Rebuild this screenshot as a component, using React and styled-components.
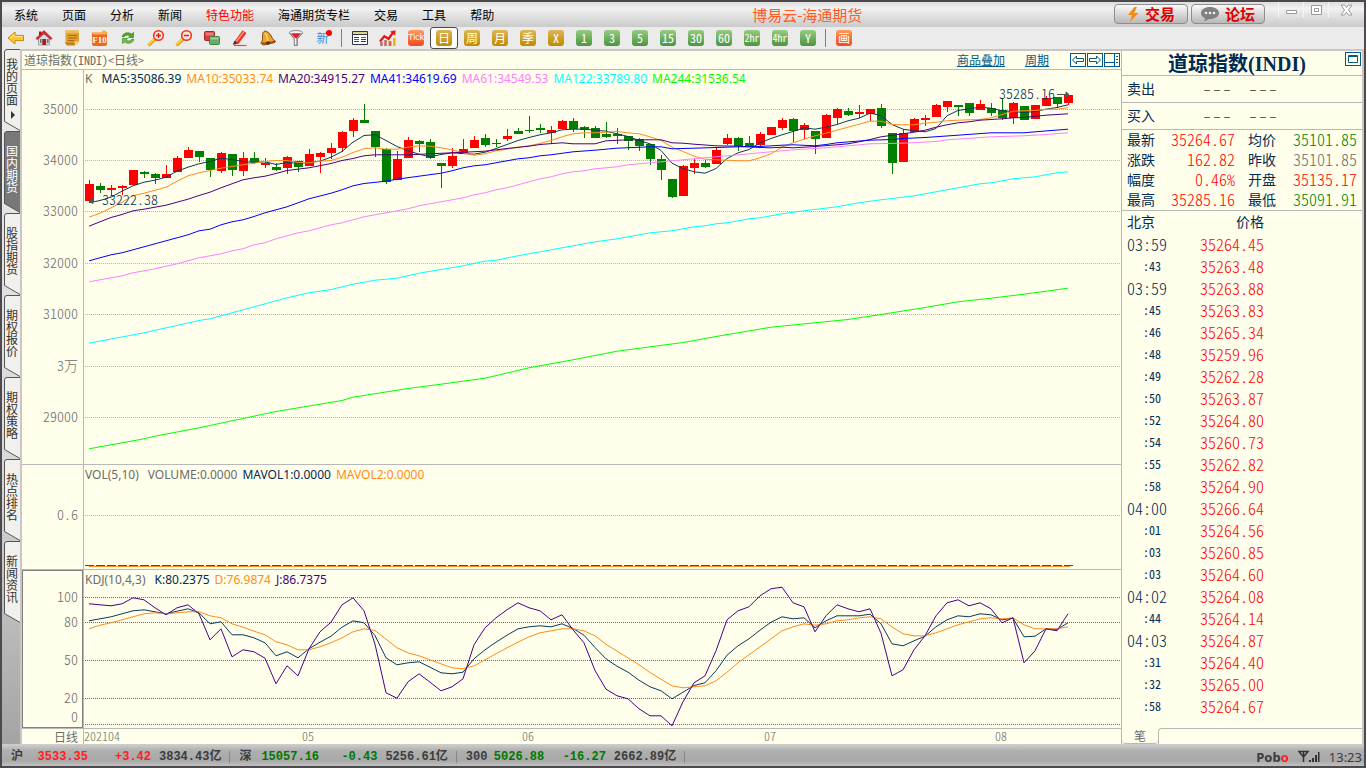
import React from "react";
import styled, { createGlobalStyle } from "styled-components";

const CJK = '"Noto Sans CJK SC", "Noto Sans", sans-serif';
const LATIN = '"Noto Sans", "Noto Sans CJK SC", sans-serif';

const color = {
  paper: "#ffffec",
  line: "#b8b8b8",
  edge: "#cdc5c5",
  frame: "#4c4a4c",
  navy: "#002b55",
  grey: "#6b6b6b",
  up: "#ff0000",
  down: "#008000",
  orange: "#ff8c1a",
  purple: "#4b0082",
};

const GlobalStyle = createGlobalStyle`
  * { box-sizing: border-box; }
  body { margin: 0; font-family: ${CJK}; font-size: 12px; background: ${color.frame}; }
  button { font: inherit; color: inherit; border: 0; padding: 0; background: none; cursor: pointer; }
  table { border-collapse: collapse; border-spacing: 0; }
  th, td { padding: 0; font-weight: 400; vertical-align: top; }
`;

/* ---------- window frame ---------- */

const Window = styled.div`
  display: flex;
  flex-direction: column;
  min-height: 100vh;
  border: 2px solid ${color.frame};
  background: #ebebeb;
`;

const TitleBar = styled.header`
  display: grid;
  grid-template-columns: 1fr auto 1fr;
  align-items: center;
  height: 25px;
  background: linear-gradient(#dcdcdc, #f2f2f2 25%, #e4e4e4 50%, #cacaca);
`;

const Menu = styled.nav`
  display: flex;
`;

const MenuItem = styled.button`
  padding: 0 12px;
  line-height: 24px;
  white-space: nowrap;
  color: ${(p) => (p.$hot ? color.up : "#000")};
`;

const AppTitle = styled.h1`
  margin: 0 0 0 246px;
  font-size: 15px;
  font-weight: 400;
  line-height: 24px;
  white-space: nowrap;
  color: #ff5a1f;
`;

const TitleTools = styled.div`
  display: flex;
  justify-content: flex-end;
  align-items: flex-start;
  height: 25px;
`;

const PillButton = styled.button`
  display: flex;
  align-items: center;
  justify-content: center;
  gap: 6px;
  width: 74px;
  height: 20px;
  margin: 2px 3px 0 0;
  border: 1px solid #8e8e8e;
  border-radius: 4px;
  background: linear-gradient(#fafafa, #d8d8d8 50%, #b8b8b8);
  color: #e00000;
  font-size: 15px;
  font-weight: 700;
  line-height: 18px;
`;

const WindowControls = styled.div`
  display: flex;
  margin-left: 10px;
`;

const WindowButton = styled.button`
  display: grid;
  place-items: center;
  width: ${(p) => (p.$wide ? "36px" : "25px")};
  height: 16px;
  border-left: 1px solid #f6f6f6;
`;

/* ---------- toolbar ---------- */

const ToolBar = styled.div`
  display: flex;
  align-items: center;
  height: 22px;
  background: #ebebeb;
`;

const ToolButton = styled.button`
  display: grid;
  place-items: center;
  width: 28px;
  height: 22px;
  border: ${(p) => (p.$active ? "1px solid #4a4a4a" : "0")};
  border-radius: 3px;
  background: ${(p) => (p.$active ? "#fff" : "none")};
`;

const ToolSeparator = styled.span`
  width: 1px;
  height: 18px;
  margin: 0 4px 0 3px;
  background: #808080;
`;

const tones = {
  gold: "linear-gradient(#dcb555, #c08a00)",
  green: "linear-gradient(#96cc80, #4c9440)",
  red: "linear-gradient(#ff9a5a, #f04a1c)",
};

const Badge = styled.span`
  width: 16px;
  height: 16px;
  border-radius: 3px;
  background: ${(p) => tones[p.$tone]};
  color: #fff;
  font-family: ${CJK};
  font-size: 12px;
  line-height: 15px;
  text-align: center;
  font-feature-settings: "hwid" 1;
`;

const TickBadge = styled(Badge)`
  font-family: "Liberation Sans Narrow", "Liberation Sans", sans-serif;
  font-size: 9px;
`;

const NewBadge = styled.span`
  display: flex;
  align-items: flex-start;
  color: #3a8ee6;
  font-size: 12px;
  line-height: 16px;

  &::after {
    content: "";
    width: 6px;
    height: 6px;
    margin: 0 0 0 -3px;
    border-radius: 50%;
    background: red;
  }
`;

/* ---------- left tabs ---------- */

const Body = styled.div`
  display: flex;
  flex: 1;
`;

const Rail = styled.nav`
  display: flex;
  flex-direction: column;
  width: 18px;
  padding-left: 2px;
  background: linear-gradient(#ebebeb, #d8d8da 60%, #a4a4a4);
`;

const RailTab = styled.button`
  display: grid;
  grid-template-columns: 16px;
  height: 82px;
  color: ${(p) => (p.$active ? "#fff" : "#333")};

  > * {
    grid-area: 1 / 1;
  }
`;

const RailLabel = styled.span`
  width: 12px;
  margin: 0 auto;
  padding-top: ${(p) => (p.$more ? "9px" : "14px")};
  font-size: 12px;
  line-height: 12px;
  word-break: break-all;
`;

/* ---------- work area ---------- */

const Work = styled.main`
  display: flex;
  flex: 1;
  border: 2px solid ${color.edge};
  border-bottom: 0;
  background: ${color.paper};
`;

const Charts = styled.section`
  display: flex;
  flex: 1;
  flex-direction: column;
  min-width: 0;
  border-right: 1px solid ${color.line};
`;

const ChartHeader = styled.div`
  display: flex;
  align-items: center;
  height: 19px;
  padding: 0 1px 0 2px;
  border-bottom: 1px solid ${color.line};
`;

const ChartName = styled.h2`
  flex: 1;
  margin: 0;
  font-size: 12px;
  font-weight: 400;
  line-height: 18px;
  color: ${color.grey};
  font-feature-settings: "hwid" 1;
`;

const HeaderLink = styled.a`
  margin-right: 20px;
  line-height: 18px;
  color: #005a8c;
`;

const HeaderButton = styled.button`
  display: grid;
  place-items: center;
  width: 16px;
  height: 14px;
  margin-left: 1px;
  border: 1px solid #005a8c;
  color: #005a8c;
`;

const Pane = styled.div`
  display: flex;
  ${(p) => (p.$height ? `height: ${p.$height}px;` : "flex: 1;")}
  min-height: ${(p) => (p.$height ? "0" : "395px")};
  border-bottom: 1px solid ${color.line};
`;

const AxisSvg = styled.svg`
  width: 61px;
  height: 100%;
  border: ${(p) => (p.$framed ? "1px solid #808080" : "0")};
  overflow: visible;
`;

const Plot = styled.div`
  display: grid;
  flex: 1;
  min-width: 0;
  border-left: 1px solid ${color.line};

  > * {
    grid-area: 1 / 1;
  }
`;

const PlotSvg = styled.svg`
  width: 100%;
  height: 100%;
  overflow: hidden;
`;

const AxisText = styled.text`
  font-family: ${CJK};
  font-size: 14px;
  font-weight: 300;
  font-feature-settings: "hwid" 1;
  fill: ${(p) => p.$fill || color.grey};
  text-anchor: ${(p) => p.$anchor || "end"};
`;

const Legend = styled.div`
  display: flex;
  gap: 5px;
  height: 20px;
  padding-left: 1px;
  font-family: ${LATIN};
  font-size: 12px;
  line-height: ${(p) => (p.$low ? "20px" : "18px")};
  white-space: nowrap;
  z-index: 1;
`;

const LegendItem = styled.span`
  color: ${(p) => p.$color};
  padding-right: ${(p) => (p.$spaced ? "4px" : "0")};
`;

const DateRow = styled.div`
  display: flex;
  height: 15px;
  line-height: 15px;
  color: ${color.grey};
`;

const Period = styled.div`
  width: 61px;
  padding-right: 5px;
  text-align: right;
`;

const DateSvg = styled.svg`
  flex: 1;
  min-width: 0;
  height: 15px;
  border-left: 1px solid ${color.line};
  overflow: visible;
`;

const DateText = styled(AxisText)`
  font-size: 12px;
`;

/* ---------- quote panel ---------- */

const Quote = styled.aside`
  display: flex;
  flex-direction: column;
  width: 240px;
  color: ${color.navy};
  font-size: 14px;
`;

const QuoteTitle = styled.div`
  display: flex;
  justify-content: flex-end;
  height: 25px;
  padding-right: 1px;
  border-bottom: 1px solid ${color.line};
`;

const QuoteName = styled.h2`
  flex: 1;
  margin: 0;
  padding-left: 8px;
  font-family: "Liberation Serif", "Noto Sans CJK SC", serif;
  font-size: 20px;
  font-weight: 700;
  line-height: 26px;
  text-align: center;
`;

const QuoteButton = styled(HeaderButton)`
  margin-top: 1px;
`;

const DealRow = styled.div`
  display: flex;
  gap: 16px;
  height: 27px;
  padding-left: 5px;
  border-bottom: 1px solid ${color.line};
  line-height: 24px;
`;

const DealLabel = styled.span`
  width: 59px;
`;

const DealValue = styled.span`
  color: #555;
  font-size: 20px;
  font-weight: 300;
  font-feature-settings: "hwid" 1;
`;

const QuoteTable = styled.table`
  width: 100%;
  table-layout: fixed;
  border-bottom: 1px solid ${color.line};

  tr { height: 20px; }
`;

const QuoteLabel = styled.th`
  width: ${(p) => (p.$first ? "42px" : "32px")};
  padding-left: ${(p) => (p.$first ? "5px" : "0")};
  line-height: 18px;
  text-align: left;
`;

const QuoteValue = styled.td`
  width: ${(p) => (p.$last ? "auto" : "84px")};
  padding-right: ${(p) => (p.$last ? "5px" : "13px")};
  color: ${(p) => p.$color};
  font-size: 16px;
  font-weight: 300;
  line-height: 18px;
  text-align: right;
  font-feature-settings: "hwid" 1;
`;

const TickTable = styled.table`
  width: 100%;
  table-layout: fixed;

  tr { height: 22px; }
`;

const TickHead = styled.th`
  width: ${(p) => (p.$price ? "auto" : "78px")};
  height: 23px;
  padding-left: ${(p) => (p.$price ? "36px" : "5px")};
  line-height: 21px;
  text-align: left;
`;

const TickTime = styled.td`
  padding-left: ${(p) => (p.$seconds ? "21px" : "5px")};
  font-size: ${(p) => (p.$seconds ? "12px" : "16px")};
  font-weight: ${(p) => (p.$seconds ? "400" : "300")};
  line-height: 20px;
  font-feature-settings: "hwid" 1;
`;

const TickPrice = styled.td`
  color: ${color.up};
  font-size: 16px;
  font-weight: 300;
  line-height: 20px;
  font-feature-settings: "hwid" 1;
`;

const QuoteTabs = styled.div`
  display: flex;
  height: 16px;
  margin-top: auto;

  &::after {
    content: "";
    flex: 1;
    border-top: 1px solid ${color.line};
    border-left: 1px solid ${color.line};
    border-top-left-radius: 4px;
  }
`;

const QuoteTab = styled.button`
  width: 36px;
  border-bottom: 1px solid ${color.line};
  border-radius: 0 0 4px 4px;
  color: ${color.grey};
  font-size: 12px;
  line-height: 15px;
`;

/* ---------- status bar ---------- */

const StatusBar = styled.footer`
  display: flex;
  align-items: center;
  height: 22px;
  padding: 3px 2px 0 9px;
  background: linear-gradient(#cfcfcf, #b0b0b0 30%, #a8a8a8 75%, #c0c0c0);
  color: #3c3c3c;
  font-family: "Liberation Mono", "Noto Sans CJK SC", monospace;
  font-size: 12px;
  font-weight: 700;
  line-height: 18px;
`;

const Market = styled.div`
  display: flex;
  padding-right: 8px;
  margin-right: 9px;
  line-height: 12px;
  border-right: 1px solid #888;
`;

const MarketName = styled.span`
  width: ${(p) => (p.$short ? "28px" : "22px")};
`;

const MarketValue = styled.span`
  width: ${(p) => p.$width}px;
  padding-right: 8px;
  text-align: right;
  color: ${(p) => p.$color};
`;

const StatusEnd = styled.div`
  display: flex;
  align-items: center;
  gap: 9px;
  margin-left: auto;
  font-family: ${LATIN};
  font-size: 13px;
`;

const BrandAccent = styled.span`
  color: #ff2020;
`;

const Clock = styled.time`
  font-weight: 400;
`;

/* ---------- chart data ---------- */

const STEP = 11;
const FIRST = 5;
const xOf = (i) => FIRST + i * STEP;

// [rising, high, body top, body bottom, low], three units per pixel
const candles = [
  [1,300,312,362,362],[0,309,318,329,339],[1,315,325,329,347],[1,314,318,323,344],[1,270,270,314,314],
  [0,272,277,281,293],[0,279,282,293,311],[1,255,282,293,293],[1,228,234,275,275],[1,201,210,234,234],
  [0,213,213,230,246],[0,234,234,270,290],[1,216,219,272,278],[0,222,222,269,287],[1,216,234,272,287],
  [0,216,234,245,251],[1,234,249,254,263],[0,249,261,269,272],[1,228,231,263,281],[0,243,243,261,276],
  [1,207,222,258,258],[1,216,219,230,278],[1,189,204,219,237],[1,153,156,203,215],[1,114,120,152,170],
  [0,72,120,129,129],[0,153,153,201,230],[0,204,207,305,311],[1,213,237,299,299],[1,171,180,233,233],
  [0,180,183,191,215],[0,177,186,233,236],[0,249,249,258,323],[1,204,228,257,263],[1,177,207,222,222],
  [1,168,180,203,203],[0,162,174,195,200],[0,177,189,192,200],[1,147,168,177,182],[0,144,153,161,161],
  [0,108,150,153,158],[0,132,144,150,158],[1,138,150,159,191],[1,120,123,147,147],[0,114,123,146,155],
  [0,138,141,150,174],[0,138,144,174,174],[0,126,162,171,174],[0,144,162,168,191],[0,168,168,182,209],
  [0,174,177,198,213],[0,192,192,237,254],[0,225,237,270,299],[0,297,297,350,353],[1,255,258,347,347],
  [1,237,249,264,281],[0,240,249,261,263],[1,204,210,252,252],[1,162,174,192,195],[0,171,174,198,212],
  [0,168,189,198,198],[1,156,162,195,200],[1,141,141,165,165],[1,114,120,144,150],[0,114,117,153,186],
  [1,129,135,149,176],[0,153,153,177,221],[1,102,105,174,174],[1,84,87,113,132],[0,84,93,104,108],
  [1,75,96,101,114],[1,87,87,101,123],[0,72,84,137,143],[0,159,159,248,281],[1,147,159,245,245],
  [1,114,117,156,156],[1,105,114,119,137],[1,72,75,110,110],[1,63,63,80,96],[0,75,75,81,108],
  [0,69,69,98,107],[1,60,72,90,90],[0,69,84,98,108],[0,54,90,114,120],[1,66,69,113,131],
  [0,78,78,120,120],[1,75,75,117,117],[1,48,54,77,77],[0,51,51,72,83],[1,42,45,68,75],
];

const indexed = (values) => values.map((v, i) => [i, v]);

const averages = [
  { color: "#0a3a5c", points: indexed([367,360,350,332,316,305,299,290,272,260,250,243,233,237,243,246,244,252,246,248,246,242,230,213,185,165,163,180,198,211,221,229,222,217,219,221,215,204,192,180,171,163,157,148,146,146,149,152,160,168,180,190,210,248,264,274,278,264,234,217,207,187,174,163,153,142,146,140,132,121,113,98,105,132,146,151,154,144,106,90,85,80,83,91,93,96,93,86,81,73]) },
  { color: color.orange, points: indexed([410,398,382,365,346,338,329,320,302,286,277,270,263,258,253,248,243,240,240,246,247,242,240,230,216,205,202,206,206,200,196,197,202,208,217,224,220,211,206,200,196,189,180,169,160,157,157,155,153,157,160,169,180,200,213,227,236,238,239,241,241,232,220,200,187,176,166,158,149,140,131,122,122,132,133,133,128,125,121,119,118,117,112,102,92,91,90,86,86,82]) },
  { color: color.purple, points: [[0,437],[1,424],[2,411],[3,402],[4,391],[5,386],[6,380],[7,374],[8,365],[9,356],[10,345],[11,335],[12,322],[13,310],[14,298],[15,292],[16,287],[17,279],[18,270],[20,262],[22,249],[23,240],[24,234],[25,226],[26,223],[29,223],[31,220],[33,217],[36,212],[38,204],[40,197],[41,192],[43,187],[44,190],[46,190],[47,181],[49,178],[52,178],[53,187],[54,188],[55,191],[57,196],[59,197],[61,201],[62,202],[63,200],[64,202],[66,198],[68,193],[69,190],[70,184],[71,177],[72,169],[74,160],[75,155],[76,149],[77,140],[78,133],[79,127],[80,124],[81,119],[83,115],[84,112],[85,111],[87,104],[89,100]] },
  { color: "#0000ff", points: [[0,541],[1,532],[2,523],[3,517],[5,499],[9,463],[10,451],[11,446],[12,433],[13,424],[14,418],[15,408],[16,397],[18,379],[20,355],[22,338],[23,328],[24,316],[25,309],[27,302],[28,296],[30,287],[32,278],[33,271],[34,262],[35,256],[36,253],[39,235],[40,232],[41,226],[42,223],[44,214],[46,209],[48,203],[51,199],[52,199],[53,205],[55,203],[59,199],[61,198],[63,194],[64,193],[66,196],[67,192],[68,187],[71,179],[73,177],[74,174],[76,171],[79,164],[82,157],[85,157],[86,154],[89,146]] },
  { color: "#ff80ff", points: [[0,604],[2,592],[3,586],[4,577],[6,565],[8,550],[10,532],[12,520],[13,511],[14,505],[15,493],[16,487],[17,475],[19,457],[20,451],[22,433],[23,427],[25,409],[27,397],[29,385],[30,376],[31,370],[34,352],[35,343],[36,337],[37,328],[38,322],[41,295],[42,289],[43,280],[44,274],[45,271],[46,265],[48,259],[49,253],[51,247],[54,238],[59,223],[62,214],[64,208],[67,202],[69,196],[71,190],[74,188],[77,183],[78,178],[82,169],[85,166],[87,162],[89,157]] },
  { color: "#00ffff", points: [[0,788],[5,757],[10,720],[11,715],[12,706],[18,652],[20,637],[22,627],[24,611],[26,599],[28,593],[30,578],[34,556],[36,542],[37,539],[39,526],[43,502],[46,484],[48,475],[51,457],[53,451],[55,439],[56,436],[57,430],[58,427],[60,415],[61,412],[63,400],[65,391],[68,379],[70,367],[72,358],[75,346],[81,310],[82,307],[84,295],[86,289],[88,277],[89,274]] },
  { color: "#00ff00", points: [[0,1105],[5,1075],[6,1067],[10,1042],[17,993],[23,960],[24,950],[29,924],[32,911],[36,893],[40,862],[44,838],[48,812],[54,786],[57,768],[62,740],[69,717],[72,702],[76,681],[79,664],[82,653],[85,641],[89,623]] },
];

const kdj = [
  { color: "#0a3a5c", points: indexed([166,160,154,145,136,133,139,145,137,130,142,175,169,208,208,217,232,271,259,277,250,230,212,185,166,172,210,277,298,292,289,305,322,325,320,280,253,230,209,190,184,181,184,175,189,209,246,280,302,320,344,364,376,400,380,360,352,316,269,241,220,194,170,154,160,157,187,166,151,151,151,146,175,235,241,226,212,184,163,151,154,145,148,163,158,214,212,190,192,172]) },
  { color: color.orange, points: indexed([190,179,172,163,154,145,142,145,142,139,139,151,157,175,185,197,208,229,238,253,253,244,232,217,199,190,195,221,247,262,271,283,295,307,310,301,283,265,247,230,214,202,196,190,190,196,211,236,257,277,298,321,341,361,367,364,361,346,320,292,268,244,220,196,184,175,179,175,166,163,157,154,160,184,205,211,211,202,190,178,169,160,157,160,157,178,190,190,190,184]) },
  { color: color.purple, points: indexed([115,118,121,115,97,103,127,148,127,118,145,223,190,274,253,259,278,355,301,331,250,199,170,118,97,136,236,382,398,349,325,350,376,364,340,238,187,157,133,112,127,136,163,148,193,232,315,371,391,400,430,451,451,481,409,352,331,256,163,136,124,91,70,65,112,124,199,151,118,130,139,130,203,331,313,253,211,151,112,103,121,112,130,172,157,292,256,190,196,145]) },
];

function Series({ points, stroke, top }) {
  const path = points.map(([i, v]) => `${xOf(i)},${(v / 3 + top + 0.5).toFixed(1)}`).join(" ");
  return <polyline points={path} fill="none" stroke={stroke} strokeWidth="1" />;
}

function GridLines({ rows, stroke }) {
  return rows.map((y) => (
    <line key={y} x1="1" x2="100%" y1={y + 0.5} y2={y + 0.5} stroke={stroke} strokeDasharray="1 1" shapeRendering="crispEdges" />
  ));
}

function Candles({ top }) {
  const y = (v) => Math.round(v / 3 + top);
  return (
    <g shapeRendering="crispEdges">
      {candles.map(([rising, high, open, close, low], i) => {
        const fill = rising ? color.up : color.down;
        return (
          <g key={i} fill={fill}>
            <rect x={xOf(i)} y={y(high)} width="1" height={Math.max(1, y(low) - y(high))} />
            <rect x={xOf(i) - 4} y={y(open)} width="9" height={Math.max(1, y(close) - y(open))} />
          </g>
        );
      })}
    </g>
  );
}

function Axis({ labels, framed }) {
  const inset = framed ? 1 : 0;
  return (
    <AxisSvg $framed={framed}>
      {labels.map(([text, y]) => (
        <AxisText key={text} x={56 - inset} y={y + 5 - inset}>{text}</AxisText>
      ))}
    </AxisSvg>
  );
}

/* ---------- icons ---------- */

const Icon = ({ children, size = 18 }) => (
  <svg width={size} height={size} viewBox="0 0 18 18" fill="none" aria-hidden="true">{children}</svg>
);

const Magnifier = ({ plus }) => (
  <Icon>
    <path d="M8 10 2.5 15.5" stroke="#f0a800" strokeWidth="3.4" strokeLinecap="round" />
    <path d="M7.5 9.5 2 15" stroke="#ffdc50" strokeWidth="1.2" strokeLinecap="round" />
    <circle cx="11.5" cy="6.5" r="4.8" fill="#ffe6e0" stroke="#e83818" strokeWidth="1.6" />
    <path d={plus ? "M9 6.5h5M11.5 4v5" : "M9 6.5h5"} stroke="#e02010" strokeWidth="1.5" />
  </Icon>
);

const icons = {
  back: (
    <Icon>
      <path d="M1 9 8 3v3.4h8.5v5.2H8V15z" fill="#ffc628" stroke="#c88a10" />
      <path d="M3 9 7.2 5.5v2h8.2" stroke="#ffe99a" />
    </Icon>
  ),
  home: (
    <Icon>
      <path d="M3.5 8v8h11V8L9 3.5z" fill="#d8dce0" stroke="#888" strokeWidth=".7" />
      <path d="M4 2.5h2.5V6H4z" fill="#a01818" />
      <path d="M.8 9.6 9 1.5l8.2 8.1-1.7 1L9 4.8l-6.5 5.8z" fill="#d82828" stroke="#901010" strokeWidth=".5" />
      <path d="M7.3 10h3.8v6H7.3z" fill="#a02020" />
      <path d="M5 10h1.6v4H5zM12 10h1.6v4H12z" fill="#69747e" />
    </Icon>
  ),
  news: (
    <Icon>
      <path d="M2.5 1.5h13.500v11l-3 3.500H5L2.500 13z" fill="#e0a030" />
      <path d="M2.500 1.500H16V4H2.500z" fill="#f2bd55" />
      <path d="M5 6.500h9M5 9h9M5 11.500h6" stroke="#a86a10" />
      <path d="M1.500 13.500h9l1.500 3H4z" fill="#c48018" />
      <path d="M12 16.500 16 12l-4 1z" fill="#f9dc98" />
    </Icon>
  ),
  f10: (
    <Icon>
      <rect x="1" y="3" width="15" height="14" rx="2" fill="#ee6818" />
      <path d="M2 3h13v2.5H2z" fill="#ffb070" />
      <path d="m13 1 4 3-2 1.5-4-3z" fill="#f0b030" />
      <text x="8.500" y="14" textAnchor="middle" fill="#fff" fontSize="9" fontWeight="700" fontFamily="Liberation Serif, serif">F10</text>
    </Icon>
  ),
  refresh: (
    <Icon>
      <path d="M3 7.5C4 4 9 2.5 12.500 5L14.500 3.500V8.500H9.500L11 6.800C8.500 5.400 6 6 5 8z" fill="#52a828" stroke="#2d7c14" strokeWidth=".6" />
      <path d="M15 10.500C14 14 9 15.500 5.500 13L3.500 14.500V9.500H8.500L7 11.200C9.500 12.600 12 12 13 10z" fill="#74c43c" stroke="#2d7c14" strokeWidth=".6" />
    </Icon>
  ),
  zoomIn: <Magnifier plus />,
  zoomOut: <Magnifier />,
  overlay: (
    <Icon>
      <rect x="1.5" y="2.5" width="10" height="9" rx="1" fill="#d83c3c" stroke="#a82828" />
      <path d="M2.5 3.5h8v3h-8z" fill="#ee7676" />
      <rect x="6.5" y="7.5" width="10" height="8" rx="1" fill="#68ac68" stroke="#3f8548" />
      <path d="M7.5 8.5h8v2h-8z" fill="#99ce94" />
    </Icon>
  ),
  pencil: (
    <Icon>
      <path d="M3.500 12.500 11.500 1.200l4 2.900L7.200 15.200z" fill="#ee3020" />
      <path d="M5.400 12.500 13 2.500" stroke="#ff9484" strokeWidth="1.4" />
      <path d="m2 16 1.200-4.300 3.600 2.700z" fill="#38302c" />
      <path d="M3 16.500h12.500" stroke="#f04838" strokeWidth="1.200" />
    </Icon>
  ),
  bell: (
    <Icon>
      <path d="M5 2.5C6.5 1.5 9.5 3 11.5 6s2 4.800 5 6.300c0 1.500-2.200 1.400-3.800 2L4.500 16C3 15.500 2 15 2 13.600c2.400-2 1.300-4.200 1.500-7.100.100-1.800.400-3.100 1.500-4z" fill="#eea428" stroke="#804010" />
      <path d="M5.800 4.500C8 5 8.500 10 8.600 12" stroke="#ffe17c" strokeWidth="1.5" />
      <path d="M3 14.300c3-.2 9.500-1.200 12.700-1.800" stroke="#6c300d" strokeWidth="1.2" />
      <circle cx="9" cy="14" r="1.8" fill="#5c280a" />
    </Icon>
  ),
  filter: (
    <Icon>
      <path d="M2.5 4 7.300 10v6.500h3V10L15.500 4z" fill="#b8bcc0" stroke="#666" strokeWidth=".8" />
      <ellipse cx="9" cy="3.700" rx="6.600" ry="2.200" fill="#f0f0f0" stroke="#777" strokeWidth=".8" />
      <path d="M4.200 4.200h9.600L9 10z" fill="#e81c28" />
      <path d="M8.400 9v6.500" stroke="#fff" />
    </Icon>
  ),
  list: (
    <Icon>
      <path d="M1.5 2.5h15v13h-15z" fill="#fff" stroke="#303848" />
      <path d="M2 3h14v2H2z" fill="#ddd48a" />
      <path d="M2 5.500h14" stroke="#303848" />
      <path d="M3 8.500h5" stroke="#15468b" />
      <path d="M10 8.500h5" stroke="#158838" />
      <path d="M3 10.500h5" stroke="#e02222" />
      <path d="M10 10.500h5" stroke="#15468b" />
      <path d="M3 12.500h5" stroke="#15468b" />
      <path d="M10 12.500h5" stroke="#333" />
    </Icon>
  ),
  trend: (
    <Icon>
      <path d="M2.500 13v4M6.500 11v6" stroke="#b87070" strokeWidth="2.600" />
      <path d="M11 12v5" stroke="#e06820" strokeWidth="2.800" />
      <path d="M15.300 9v8" stroke="#e8b818" strokeWidth="2.600" />
      <path d="m1 12.500 4.400-5.200 4.200 2.500L14 3.600" stroke="#e81818" strokeWidth="2.400" />
      <path d="m11 2.500 5.500-1.200-.2 5.400z" fill="#e81818" />
    </Icon>
  ),
};

const ArrowBox = ({ flip }) => (
  <svg width="14" height="12" viewBox="0 0 14 12" fill="none" stroke="currentColor" aria-hidden="true">
    <path d={flip ? "M12.5 6 8.5 2v2.5h-7v3h7V10z" : "M1.5 6l4-4v2.5h7v3h-7V10z"} />
  </svg>
);

const leftTools = [
  ["后退", "back"], ["首页", "home"], ["资讯", "news"], ["基本资料", "f10"], ["刷新", "refresh"],
  ["放大", "zoomIn"], ["缩小", "zoomOut"], ["叠加", "overlay"], ["画线", "pencil"], ["预警", "bell"], ["筛选", "filter"],
];

const periods = [
  ["日", "gold"], ["周", "gold"], ["月", "gold"], ["季", "gold"], ["X", "gold"],
  ["1", "green"], ["3", "green"], ["5", "green"], ["15", "green"], ["30", "green"], ["60", "green"],
  ["2hr", "green"], ["4hr", "green"], ["Y", "green"],
];

const HourBadge = styled(Badge)`
  font-size: 10px;
`;

const menus = ["系统", "页面", "分析", "新闻", "特色功能", "海通期货专栏", "交易", "工具", "帮助"];
const tabs = ["我的页面", "国内期货", "股指期货", "期权报价", "期权策略", "热点排名", "新闻资讯"];

const quoteRows = [
  ["最新", "35264.67", color.up, "均价", "35101.85", color.down],
  ["涨跌", "162.82", color.up, "昨收", "35101.85", color.grey],
  ["幅度", "0.46%", color.up, "开盘", "35135.17", color.up],
  ["最高", "35285.16", color.up, "最低", "35091.91", color.down],
];

const ticks = [
  ["03:59", "35264.45"], [":43", "35263.48"], ["03:59", "35263.88"], [":45", "35263.83"],
  [":46", "35265.34"], [":48", "35259.96"], [":49", "35262.28"], [":50", "35263.87"],
  [":52", "35264.80"], [":54", "35260.73"], [":55", "35262.82"], [":58", "35264.90"],
  ["04:00", "35266.64"], [":01", "35264.56"], [":03", "35260.85"], [":03", "35264.60"],
  ["04:02", "35264.08"], [":44", "35264.14"], ["04:03", "35264.87"], [":31", "35264.40"],
  [":32", "35265.00"], [":58", "35264.67"],
];

const markets = [
  { name: "沪", value: "3533.35", change: "+3.42", amount: "3834.43亿", tone: "#ff2020", widths: [63, 63] },
  { name: "深", value: "15057.16", change: "-0.43", amount: "5256.61亿", tone: "#007800", widths: [61, 63] },
  { name: "300", value: "5026.88", change: "-16.27", amount: "2662.89亿", tone: "#007800", widths: [58, 62] },
];

/* ---------- page ---------- */

function Header() {
  return (
    <TitleBar>
      <Menu>
        {menus.map((m) => <MenuItem key={m} $hot={m === "特色功能"}>{m}</MenuItem>)}
      </Menu>
      <AppTitle>博易云-海通期货</AppTitle>
      <TitleTools>
        <PillButton>
          <svg width="12" height="15" viewBox="0 0 12 15" aria-hidden="true"><path d="M7.500 0 1 8h4L3 15l8.500-9H7L10 0z" fill="#f58a10" /></svg>
          交易
        </PillButton>
        <PillButton>
          <svg width="18" height="14" viewBox="0 0 18 14" aria-hidden="true">
            <path d="M9 0c5 0 9 2.600 9 6s-4 6-9 6l-2 .2C6 13.400 4.400 14 3 14c.9-.9 1.100-1.800 1-2.700C1.600 10.300 0 8.300 0 6c0-3.400 4-6 9-6z" fill="#808080" />
            <circle cx="5" cy="6" r="1.300" fill="#eee" /><circle cx="9" cy="6" r="1.300" fill="#eee" /><circle cx="13" cy="6" r="1.300" fill="#eee" />
          </svg>
          论坛
        </PillButton>
        <WindowControls>
          <WindowButton aria-label="最小化">
            <svg width="13" height="12" viewBox="0 0 13 12"><path d="M1.500 6.500h10v3h-10z" fill="#fff" stroke="#999" /></svg>
          </WindowButton>
          <WindowButton aria-label="最大化">
            <svg width="13" height="12" viewBox="0 0 13 12"><path d="M1.500 1.500h10v9h-10z" fill="#fff" stroke="#999" /><path d="M4.500 4.500h4v3h-4z" fill="none" stroke="#999" /></svg>
          </WindowButton>
          <WindowButton aria-label="关闭" $wide>
            <svg width="13" height="12" viewBox="0 0 13 12"><path d="M1 1h3.500l2 2.600L8.500 1H12L8.500 6l3.500 5H8.500l-2-2.800L4.500 11H1l3.500-5z" fill="#fff" stroke="#999" /></svg>
          </WindowButton>
        </WindowControls>
      </TitleTools>
    </TitleBar>
  );
}

function Tools() {
  return (
    <ToolBar>
      {leftTools.map(([label, name]) => (
        <ToolButton key={name} aria-label={label}>{icons[name]}</ToolButton>
      ))}
      <ToolButton><NewBadge>新</NewBadge></ToolButton>
      <ToolSeparator />
      <ToolButton aria-label="报价">{icons.list}</ToolButton>
      <ToolButton aria-label="走势">{icons.trend}</ToolButton>
      <ToolButton><TickBadge $tone="red">Tick</TickBadge></ToolButton>
      {periods.map(([text, tone]) => (
        <ToolButton key={text} $active={text === "日"}>
          {text.endsWith("hr") ? <HourBadge $tone={tone}>{text}</HourBadge> : <Badge $tone={tone}>{text}</Badge>}
        </ToolButton>
      ))}
      <ToolSeparator />
      <ToolButton><Badge $tone="red">画</Badge></ToolButton>
    </ToolBar>
  );
}

function SideTabs() {
  return (
    <Rail>
      {tabs.map((name, i) => (
        <RailTab key={name} $active={i === 1}>
          <svg width="16" height="82" viewBox="0 0 16 82" aria-hidden="true">
            <path d="M16 .5H3Q.5.5.5 3V72.500L16 81.500z" fill={i === 1 ? "#787878" : "#f1f0ec"} />
            <path d="M16 .5H3Q.5.5.5 3V72.500L16 81.500" fill="none" stroke="#555" />
            {i === 0 && <path d="m7 62 4 4-4 4z" fill="#333" />}
          </svg>
          <RailLabel $more={i === 0}>{name}</RailLabel>
        </RailTab>
      ))}
    </Rail>
  );
}

function ChartArea() {
  return (
    <Charts>
      <ChartHeader>
        <ChartName>道琼指数(INDI)&lt;日线&gt;</ChartName>
        <HeaderLink href="#overlay">商品叠加</HeaderLink>
        <HeaderLink href="#period">周期</HeaderLink>
        <HeaderButton aria-label="上一个"><ArrowBox /></HeaderButton>
        <HeaderButton aria-label="下一个"><ArrowBox flip /></HeaderButton>
        <HeaderButton aria-label="布局">
          <svg width="14" height="12" viewBox="0 0 14 12" fill="none" stroke="currentColor" aria-hidden="true">
            <path d="M0 8.500h9M9.500 0v12M11 2.500h2M11 5.500h2M11 8.500h2" />
          </svg>
        </HeaderButton>
      </ChartHeader>

      <Pane>
        <Axis labels={[["35000", 39], ["34000", 90], ["33000", 141], ["32000", 193], ["31000", 244], ["3万", 296], ["29000", 347]]} />
        <Plot>
          <Legend>
            <LegendItem $color={color.grey} $spaced>K</LegendItem>
            <LegendItem $color={color.navy}>MA5:35086.39</LegendItem>
            <LegendItem $color={color.orange}>MA10:35033.74</LegendItem>
            <LegendItem $color={color.purple}>MA20:34915.27</LegendItem>
            <LegendItem $color="#0000ff">MA41:34619.69</LegendItem>
            <LegendItem $color="#ff80ff">MA61:34549.53</LegendItem>
            <LegendItem $color="#00ffff">MA122:33789.80</LegendItem>
            <LegendItem $color="#00ff00">MA244:31536.54</LegendItem>
          </Legend>
          <PlotSvg>
            <GridLines rows={[39, 90, 141, 193, 244, 296, 347]} stroke="#b4b4b4" />
            <Candles top={10} />
            {averages.map((s) => <Series key={s.color} points={s.points} stroke={s.color} top={10} />)}
            <path d="M5 131.500h8M5 131.500l4-3v5z" stroke="#555" fill="#555" />
            <AxisText x="18" y="135" $anchor="start" $fill={color.navy}>33222.38</AxisText>
            <path d="M973 24.500h11M982 22l3 2.500-3 2.500z" stroke="#555" fill="#555" />
            <AxisText x="915" y="29" $anchor="start" $fill={color.navy}>35285.16</AxisText>
          </PlotSvg>
        </Plot>
      </Pane>

      <Pane $height={105}>
        <Axis labels={[["0.6", 50]]} />
        <Plot>
          <Legend $low>
            <LegendItem $color={color.grey} $spaced>VOL(5,10)</LegendItem>
            <LegendItem $color={color.grey}>VOLUME:0.0000</LegendItem>
            <LegendItem $color={color.navy}>MAVOL1:0.0000</LegendItem>
            <LegendItem $color={color.orange}>MAVOL2:0.0000</LegendItem>
          </Legend>
          <PlotSvg shapeRendering="crispEdges">
            <GridLines rows={[50]} stroke="#b4b4b4" />
            <rect x="5" y="101" width="981" height="1" fill={color.orange} />
            {candles.map(([rising], i) => (
              <rect key={i} x={xOf(i) - 4} y="100" width="9" height="1" fill={rising ? color.up : color.down} />
            ))}
          </PlotSvg>
        </Plot>
      </Pane>

      <Pane $height={159}>
        <Axis framed labels={[["100", 27], ["80", 52], ["50", 90], ["20", 128], ["0", 147]]} />
        <Plot>
          <Legend $low>
            <LegendItem $color={color.grey} $spaced>KDJ(10,4,3)</LegendItem>
            <LegendItem $color={color.navy}>K:80.2375</LegendItem>
            <LegendItem $color={color.orange}>D:76.9874</LegendItem>
            <LegendItem $color={color.purple}>J:86.7375</LegendItem>
          </Legend>
          <PlotSvg>
            <GridLines rows={[27, 52, 90, 128, 154]} stroke="#6c6c6c" />
            {kdj.map((s) => <Series key={s.color} points={s.points} stroke={s.color} top={-5} />)}
          </PlotSvg>
        </Plot>
      </Pane>

      <DateRow>
        <Period>日线</Period>
        <DateSvg>
          {[["202104", 0], ["05", 218], ["06", 438], ["07", 680], ["08", 911]].map(([text, x]) => (
            <DateText key={text} x={x} y="12" $anchor="start">{text}</DateText>
          ))}
        </DateSvg>
      </DateRow>
    </Charts>
  );
}

function QuotePanel() {
  return (
    <Quote>
      <QuoteTitle>
        <QuoteName>道琼指数(INDI)</QuoteName>
        <QuoteButton aria-label="最大化行情">
          <svg width="14" height="12" viewBox="0 0 14 12" fill="none" stroke="currentColor" aria-hidden="true">
            <path d="M2.500 2.500h9v7h-9zM2.500 3.500h9" />
          </svg>
        </QuoteButton>
      </QuoteTitle>
      {["卖出", "买入"].map((label) => (
        <DealRow key={label}>
          <DealLabel>{label}</DealLabel>
          <DealValue>---</DealValue>
          <DealValue>---</DealValue>
        </DealRow>
      ))}
      <QuoteTable>
        <tbody>
          {quoteRows.map(([a, av, ac, b, bv, bc]) => (
            <tr key={a}>
              <QuoteLabel scope="row" $first>{a}</QuoteLabel>
              <QuoteValue $color={ac}>{av}</QuoteValue>
              <QuoteLabel scope="row">{b}</QuoteLabel>
              <QuoteValue $color={bc} $last>{bv}</QuoteValue>
            </tr>
          ))}
        </tbody>
      </QuoteTable>
      <TickTable>
        <thead>
          <tr>
            <TickHead scope="col">北京</TickHead>
            <TickHead scope="col" $price>价格</TickHead>
          </tr>
        </thead>
        <tbody>
          {ticks.map(([time, price], i) => (
            <tr key={i}>
              <TickTime $seconds={time.startsWith(":")}>{time}</TickTime>
              <TickPrice>{price}</TickPrice>
            </tr>
          ))}
        </tbody>
      </TickTable>
      <QuoteTabs>
        <QuoteTab>笔</QuoteTab>
      </QuoteTabs>
    </Quote>
  );
}

function Status() {
  return (
    <StatusBar>
      {markets.map((m) => (
        <Market key={m.name}>
          <MarketName $short={m.name.length > 1}>{m.name}</MarketName>
          <MarketValue $color={m.tone} $width={m.widths[0]}>{m.value}</MarketValue>
          <MarketValue $color={m.tone} $width={m.widths[1]}>{m.change}</MarketValue>
          <span>{m.amount}</span>
        </Market>
      ))}
      <StatusEnd>
        <span>Pob<BrandAccent>o</BrandAccent></span>
        <svg width="22" height="14" viewBox="0 0 22 14" aria-hidden="true">
          <path d="M1 1.500h9L5.500 7zM5.500 2v10" fill="none" stroke="#333" strokeWidth="1.500" />
          <path d="M11 10h2v2h-2zM14 8h2v4h-2zM17 5h2v7h-2zM20 2h1.500v10H20z" fill="#333" />
        </svg>
        <Clock>13:23</Clock>
      </StatusEnd>
    </StatusBar>
  );
}

export default function App() {
  return (
    <Window>
      <GlobalStyle />
      <Header />
      <Tools />
      <Body>
        <SideTabs />
        <Work>
          <ChartArea />
          <QuotePanel />
        </Work>
      </Body>
      <Status />
    </Window>
  );
}
